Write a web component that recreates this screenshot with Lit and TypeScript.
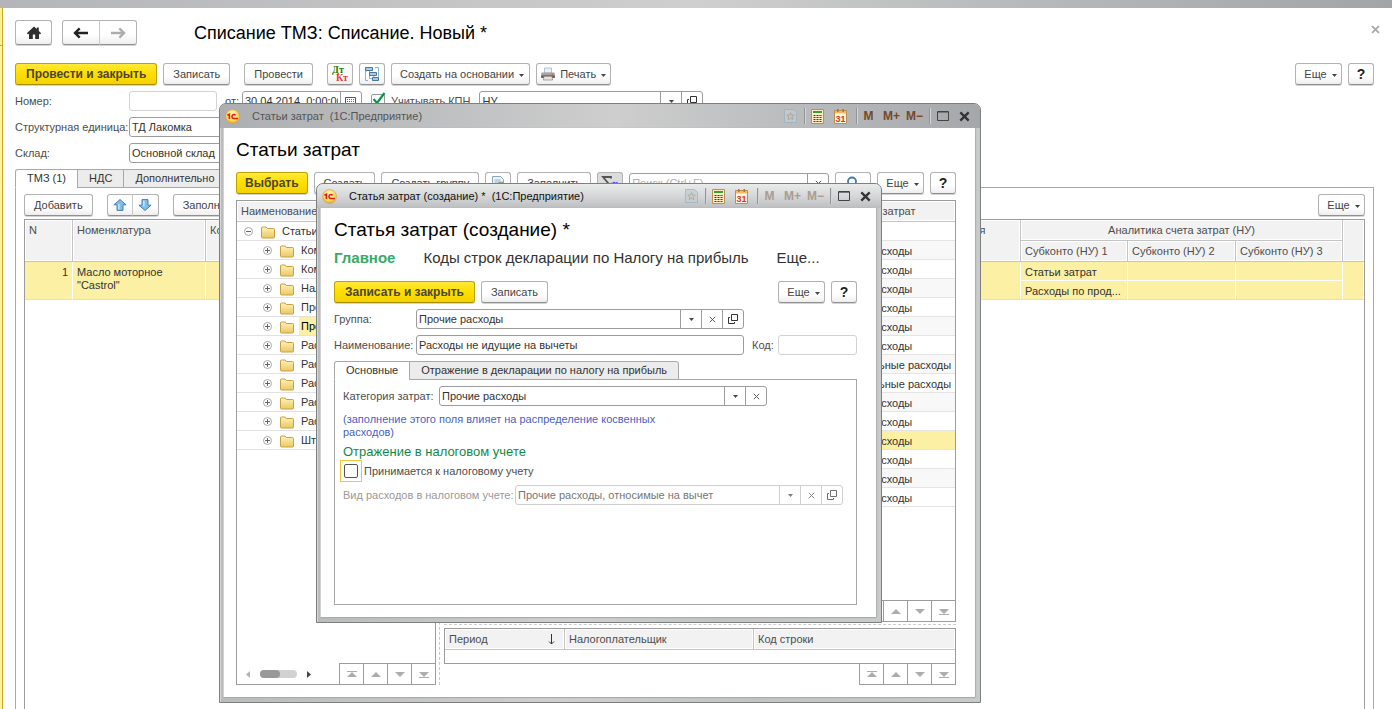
import { LitElement, html, css, svg, nothing } from "lit";
import { customElement, property } from "lit/decorators.js";
import { classMap } from "lit/directives/class-map.js";

/* ---------- icons ---------- */

const caret = html`<svg class="caret" width="5" height="3" viewBox="0 0 5 3" aria-hidden="true"><path d="M0 0h5L2.5 3z" fill="#444" /></svg>`;

const homeIcon = html`<svg width="16" height="14" viewBox="0 0 16 14" aria-hidden="true">
  <path d="M8 .6 .8 7.2l1.3 1.2.9-.8V13h3.8V8.6h2.4V13H13V7.6l.9.8 1.3-1.2-2.4-2.2V1.6h-2v1.5z" fill="#2f2f2f" /></svg>`;

const arrowIcon = (right: boolean) => html`<svg width="16" height="12" viewBox="0 0 16 12" aria-hidden="true">
  ${right
    ? svg`<path d="M1 6h12M9.300 1.300 14 6l-4.700 4.700" fill="none" stroke="#adadad" stroke-width="2.400" />`
    : svg`<path d="M15 6H3M6.700 1.300 2 6l4.700 4.700" fill="none" stroke="#222" stroke-width="2.400" />`}</svg>`;

const ledgerIcon = html`<svg width="18" height="18" viewBox="0 0 18 18" aria-hidden="true">
  <text x="1" y="8" class="dt">Дт</text><text x="5" y="16" class="kt">Кт</text></svg>`;

const structureIcon = html`<svg width="16" height="16" viewBox="0 0 16 16" aria-hidden="true">
  <g fill="none" stroke="#8fb0cc"><path d="M3 5H1.500v9.500H4M11 1.500h3.500V11M5.500 4.500v8H8M10 9.500v2" /></g>
  <path d="M1.500 1.500h7v3h-7zM5.500 6.500h7v3h-7zM8.500 11.500h6v3h-6z" fill="#a9cbe6" stroke="#44789f" /></svg>`;

const printerIcon = html`<svg width="14" height="14" viewBox="0 0 14 14" aria-hidden="true">
  <path d="M3.500 1h7v5h-7z" fill="#e9f1fa" stroke="#a5b4c4" stroke-width=".8" />
  <path d="M1 5.500h12a1 1 0 0 1 .8 1V11H.2V6.500a1 1 0 0 1 .8-1z" fill="#a9a49f" />
  <path d="M.2 8.300h13.600V11H.2z" fill="#6b625c" />
  <path d="M3 9.300h8l.7 3.700H2.300z" fill="#e8e3de" stroke="#7c736c" stroke-width=".6" />
  <path d="M10.500 6.500h2v1h-2z" fill="#d55b3a" /></svg>`;

const blueArrow = (down: boolean) => html`<svg width="14" height="12" viewBox="0 0 14 12" aria-hidden="true">
  <path d=${down ? "M7 11.500 .9 6.200H4V.6h6v5.600h3.100z" : "M7 .5.900 5.800H4v5.600h6V5.800h3.100z"} fill="#7fbfea" stroke="#3d76a6" stroke-width=".9" />
  <path d=${down ? "M5 1.500h1.600v6H5z" : "M5 5h1.600v5.500H5z"} fill="#c3e4fa" /></svg>`;

const calendarGrid = html`<svg width="11" height="9" viewBox="0 0 11 9" aria-hidden="true">
  <path d="M.5.500h10v8H.5z" fill="#fff" stroke="#555" />
  <path d="M2 2.500h7M2 4.500h7M2 6.500h7" stroke="#666" stroke-dasharray="1 1" /></svg>`;

const openIcon = html`<svg width="10" height="10" viewBox="0 0 10 10" aria-hidden="true">
  <path d="M3.500.500h6v6h-6z" fill="none" stroke="#333" /><path d="M2 3.500H.5v6h6V8" fill="none" stroke="#333" /></svg>`;

const crossIcon = html`<svg width="7" height="7" viewBox="0 0 7 7" aria-hidden="true"><path d="m.8.8 5.400 5.400M6.200.8.800 6.200" stroke="#555" /></svg>`;

const boldCross = (color: string, size: number) => html`<svg width=${size} height=${size} viewBox="0 0 10 10" aria-hidden="true">
  <path d="m1.200 1.200 7.600 7.600M8.800 1.200 1.200 8.800" stroke=${color} stroke-width="2.100" /></svg>`;

const folderIcon = html`<svg width="14" height="13" viewBox="0 0 14 13" aria-hidden="true">
  <defs><linearGradient id="fold" x1="0" y1="0" x2="0" y2="1"><stop offset="0" stop-color="#fdf3b8" /><stop offset="1" stop-color="#ecc764" /></linearGradient></defs>
  <path d="M.5 2a1 1 0 0 1 1-1h3.600l1.200 1.500h6.200a1 1 0 0 1 1 1V11a1 1 0 0 1-1 1h-11a1 1 0 0 1-1-1z" fill="url(#fold)" stroke="#c8a045" /></svg>`;

const expander = (open: boolean) => html`<svg width="9" height="9" viewBox="0 0 9 9" aria-hidden="true">
  <circle cx="4.500" cy="4.500" r="4" fill="#fff" stroke="#a8a8a8" /><path d=${open ? "M2 4.500h5" : "M2 4.500h5M4.500 2v5"} stroke="#666" /></svg>`;

const copyIcon = html`<svg width="16" height="16" viewBox="0 0 16 16" aria-hidden="true">
  <path d="M2.500 1.500h8l3 3v9h-11z" fill="#eef4fa" stroke="#8ba6bf" /><path d="M4.500 5h6M4.500 7h6M4.500 9h4" stroke="#8fb2cf" />
  <circle cx="11" cy="10" r="3.500" fill="#7fae85" /></svg>`;

const sigmaIcon = html`<svg width="18" height="16" viewBox="0 0 18 16" aria-hidden="true">
  <path d="M10 3.500V2H2l5 6-5 6h8v-1.500" fill="none" stroke="#555" stroke-width="1.800" /><path d="M10 8.500h2l1-1 1.500 1 2-1" fill="none" stroke="#4a4ae0" stroke-width="1.500" /></svg>`;

const magnifier = html`<svg width="14" height="14" viewBox="0 0 14 14" aria-hidden="true">
  <circle cx="6" cy="5.500" r="4" fill="none" stroke="#4779a8" stroke-width="1.800" /><path d="m9 9 3 4" stroke="#4779a8" stroke-width="2" /></svg>`;

const logo = html`<svg width="15" height="15" viewBox="0 0 15 15" aria-hidden="true">
  <defs><radialGradient id="sun" cx=".5" cy=".35" r=".65"><stop offset="0" stop-color="#fffbd0" /><stop offset=".7" stop-color="#fbd94b" /><stop offset="1" stop-color="#e7a52c" /></radialGradient></defs>
  <circle cx="7.500" cy="7.500" r="6.900" fill="url(#sun)" stroke="#d9a066" stroke-width=".8" />
  <path d="M2.400 6.200 4.400 5.200v4.800" fill="none" stroke="#df1f18" stroke-width="1.600" />
  <path d="M10.600 6.400A2 2 0 1 0 8.600 9.500h4.400" fill="none" stroke="#df1f18" stroke-width="1.500" /></svg>`;

const starIcon = html`<svg width="13" height="14" viewBox="0 0 13 14" aria-hidden="true" opacity=".75">
  <path d="M.5.500h9l3 3v10H.5z" fill="#c3ccd4" stroke="#9fb0bf" />
  <path d="m6.500 3.500 1.100 2.400 2.600.3-1.900 1.800.5 2.600-2.300-1.300-2.300 1.300.5-2.600-1.900-1.800 2.600-.3z" fill="#c9c2b4" stroke="#9a9484" stroke-width=".7" /></svg>`;

const calcIcon = html`<svg width="13" height="15" viewBox="0 0 13 15" aria-hidden="true">
  <path d="M.5.500h12v14H.5z" fill="#fdebc4" stroke="#b98f54" /><path d="M2 2h9v2H2z" fill="#3f9c35" />
  <path d="M2.500 6.500h8M2.500 8.500h8M2.500 10.500h8M2.500 12.500h8" stroke="#3b3b3b" stroke-dasharray="2 1" /><path d="M8.500 6.500h2" stroke="#d23a2a" /></svg>`;

const dateIcon = html`<svg width="13" height="15" viewBox="0 0 13 15" aria-hidden="true">
  <path d="M.5 1.500h12v13H.5z" fill="#fff6e2" stroke="#b98f54" /><path d="M1 2h11v2.500H1z" fill="#f0bd63" />
  <path d="M3 0h1.500v3H3zM8.500 0H10v3H8.500z" fill="#b07436" /><text x="6.500" y="13" class="day">31</text></svg>`;

const maximizeIcon = html`<svg width="12" height="10" viewBox="0 0 12 10" aria-hidden="true">
  <path d="M.5.500h11v9H.5z" fill="none" stroke="#444" /><path d="M1 1.500h10" stroke="#777" /></svg>`;

const scrollGlyph = (kind: string) => {
  const shape: Record<string, string> = {
    first: "M0 0h10v1H0zM5 1l5 5H0z",
    up: "M5 1l5 5H0z",
    down: "M0 1h10L5 6z",
    last: "M0 6h10v1H0zM0 1h10L5 6z",
  };
  return html`<svg width="10" height="7" viewBox="0 0 10 7" aria-hidden="true"><path d=${shape[kind]} fill="#adadad" /></svg>`;
};

/* ---------- window frame ---------- */

@customElement("desk-window")
export class DeskWindow extends LitElement {
  @property() caption = "";
  @property({ type: Boolean, reflect: true }) active = false;

  static styles = css`
    :host {
      position: absolute;
      box-sizing: border-box;
      display: flex;
      flex-direction: column;
      border: 1px solid #7d7f7f;
      border-radius: 7px 7px 0 0;
      padding: 0 5px 5px 4px;
      background: linear-gradient(90deg, #b9bbbd, #cfcfcf 45%, #c2c4c4 70%, #c9caca);
      box-shadow: inset 1px 1px 0 #d8d8d8;
    }
    .bar {
      display: flex;
      align-items: center;
      height: 24px;
      flex: none;
      margin: 0 -5px 0 -4px;
      border-radius: 6px 6px 0 0;
      background: linear-gradient(90deg, #adaeb1, #b8babc 20%, #cecece 52%, #b6b8ba 80%, #a6a7aa);
      color: #555;
    }
    :host([active]) .bar {
      background: linear-gradient(#e9eaea, #d6d7d8 50%, #bcbec0);
      color: #111;
    }
    .logo { display: flex; margin: 0 12px 0 5px; }
    .caption {
      flex: 1;
      min-width: 0;
      font-size: 11px;
      font-weight: 400;
      margin: 0;
      white-space: pre;
      overflow: hidden;
    }
    .tools {
      display: grid;
      grid-template-columns: 23px 5px 21px 25px 7px 17px 29px 17px 13px 14px 29px;
      align-items: center;
      justify-items: center;
      height: 22px;
      padding-right: 1px;
    }
    button {
      display: flex;
      border: 0;
      padding: 0;
      background: none;
      font: bold 12px "Liberation Sans", Arial, sans-serif;
      color: #75482a;
      white-space: nowrap;
    }
    :host([active]) .mem { color: #aa9c92; }
    .sep { width: 1px; height: 16px; background: #929496; border-right: 1px solid #d5d5d5; }
    .day { font: bold 9px "Liberation Sans", Arial, sans-serif; fill: #dc3519; text-anchor: middle; }
    .body {
      flex: 1;
      min-height: 0;
      display: flex;
      flex-direction: column;
      background: #fff;
      box-shadow: 0 1px 1px #a9abab, 1px 0 1px #b0b2b2, -1px 0 0 #d6d8d8;
    }
  `;

  render() {
    return html`
      <header class="bar">
        <span class="logo">${logo}</span>
        <h2 class="caption">${this.caption}</h2>
        <div class="tools">
          <button aria-label="Избранное">${starIcon}</button>
          <span class="sep"></span>
          <button aria-label="Калькулятор">${calcIcon}</button>
          <button aria-label="Календарь">${dateIcon}</button>
          <span class="sep"></span>
          <button class="mem">M</button>
          <button class="mem">M+</button>
          <button class="mem">M−</button>
          <span class="sep"></span>
          <button aria-label="Развернуть">${maximizeIcon}</button>
          <button aria-label="Закрыть">${boldCross("#333", 11)}</button>
        </div>
      </header>
      <div class="body"><slot></slot></div>
    `;
  }
}

/* ---------- application ---------- */

const TREE = [
  "Командировки",
  "Коммунальные",
  "Налоги",
  "Проценты",
  "Прочие расходы",
  "Расходы на оплату",
  "Расходы на рекламу",
  "Расходы на ремонт",
  "Расходы по складу",
  "Расходы прочие",
  "Штрафы, пени",
];

const OTHER = "Прочие расходы";
const MATERIAL = "Материальные расходы";
const KINDS = ["", OTHER, OTHER, OTHER, OTHER, OTHER, OTHER, MATERIAL, MATERIAL, OTHER, OTHER, OTHER, OTHER, OTHER, OTHER];

@customElement("app-root")
export class AppRoot extends LitElement {
  static styles = css`
    :host {
      --line: #9c9c9c;
      --select: #fcf0a4;
      position: relative;
      display: flex;
      flex-direction: column;
      min-height: 100vh;
      overflow: hidden;
      background: #fff;
      font: 11px/13px "Liberation Sans", Arial, sans-serif;
      color: #333;
    }
    *, *::before { box-sizing: border-box; }
    button, input { font: inherit; color: inherit; margin: 0; }
    h1, h3, p { margin: 0; font-weight: 400; }

    .strip { height: 8px; background: linear-gradient(90deg, #b4b5b8, #c9c9c9 40%, #cfcfcf 50%, #b8babb 72%, #a3a4a7); }
    .shell { flex: 1; display: flex; isolation: isolate; }
    .rail { width: 3px; background: #fdf4a6; border-right: 1px solid #c6ab16; }
    .rail::before { content: ""; display: block; height: 38px; background: #fbf09a; border-bottom: 1px solid #c6ab16; }
    .page { flex: 1; min-width: 0; display: flex; flex-direction: column; padding: 12px 18px 0 12px; }

    .row { display: flex; align-items: center; gap: 6px; }
    .push { margin-left: auto; }
    .apart { margin-left: 8px; }

    .btn {
      display: flex;
      align-items: center;
      justify-content: center;
      gap: 5px;
      flex: none;
      height: 22px;
      padding: 0 9px;
      border: 1px solid #b2b2b2;
      border-bottom-color: #8f8f8f;
      border-radius: 3px;
      background: linear-gradient(#fff 60%, #eee);
      box-shadow: 0 1px 0 #d4d4d4;
      color: #444;
      white-space: nowrap;
    }
    .btn.primary {
      padding: 0 10px;
      border-color: #c0a200;
      border-bottom-color: #a88c00;
      background: linear-gradient(#ffe93b, #ffe000 45%, #f3d200);
      font-size: 12px;
      font-weight: 700;
      color: #4d4630;
    }
    .btn.primary.short { padding: 0 8px; }
    .btn.drop { padding: 0 5px 0 8px; }
    .btn.print { padding: 0 4px; }
    .btn.square { width: 26px; padding: 0; }
    .btn.help { font-size: 14px; font-weight: 700; color: #222; }
    .btn.more { width: 47px; padding: 0 0 0 4px; }
    .btn.pressed { background: #dcdcdc; }
    .btn.find { width: 36px; padding: 0; }
    .caret { margin-top: 3px; }
    .dt, .kt { font: bold 10px "Liberation Serif", "Times New Roman", serif; }
    .dt { fill: #1c7d0c; }
    .kt { fill: #f2382f; }

    .pair { display: flex; }
    .pair .btn { border-radius: 3px 0 0 3px; padding: 0; width: 26px; }
    .pair .btn + .btn { border-left-color: #c8c8c8; margin-left: -1px; width: 27px; border-radius: 0 3px 3px 0; }

    .head { display: flex; align-items: center; height: 25px; margin-bottom: 18px; }
    .head .btn { height: 25px; width: 37px; }
    .head .pair { margin: 0 57px 0 10px; }
    .head .pair .btn { width: 38px; }
    h1 { font-size: 19px; line-height: 24px; color: #000; white-space: nowrap; }
    .head h1 { font-size: 18px; }
    .bare { display: flex; border: 0; padding: 0; background: none; }
    .head .bare { margin: -6px -6px 0 auto; }

    .form { display: grid; gap: 6px; padding: 6px 0; }
    .lab { color: #4d4d4d; white-space: nowrap; flex: none; }
    .form .lab.main { width: 114px; }
    .form .row { gap: 0; }
    .field {
      display: flex;
      height: 20px;
      border: 1px solid var(--line);
      border-radius: 3px;
      background: #fff;
      overflow: hidden;
      flex: none;
    }
    .field input { flex: 1; min-width: 0; border: 0; padding: 0 2px; background: none; outline: 0; }
    .field input::placeholder { color: #b0b0b0; }
    .field button {
      width: 21px;
      flex: none;
      display: flex;
      align-items: center;
      justify-content: center;
      padding: 0;
      border: 0;
      border-left: 1px solid var(--line);
      background: none;
    }
    .field .caret { margin: 0; }
    .field.faint { border-color: #d2d2d2; }
    .field.off { border-color: #cfcfcf; color: #777; }
    .field.off button { border-color: #cfcfcf; }
    .field.off svg { opacity: .7; }
    .w328 { width: 328px; }
    .number { width: 88px; }
    .date { width: 120px; }
    .book { width: 224px; }
    .wide { width: 574px; }
    .from { margin: 0 3px 0 8px; }
    .tax { margin: 0 9px 0 6px; }
    .field.search { flex: 1; min-width: 0; }

    .check {
      appearance: none;
      width: 14px;
      height: 14px;
      flex: none;
      border: 1px solid #555;
      border-radius: 2px;
      background: #fff;
    }
    .tick { position: relative; display: flex; margin-left: 9px; }
    .tick .check { border-color: #999; }
    .tick svg { position: absolute; left: 1px; top: -2px; pointer-events: none; }
    .focus { display: flex; padding: 3px; border: 1px solid #f3c832; margin-left: -3px; }

    .tabs { display: flex; position: relative; z-index: 1; height: 19px; margin-bottom: -1px; }
    .tab {
      border: 1px solid #a8a8a8;
      margin-left: -1px;
      background: #ececec;
      padding: 0 11px;
      white-space: nowrap;
    }
    .tab:first-child { margin: 0; border-radius: 3px 0 0 0; }
    .tab:last-child { border-radius: 0 3px 0 0; }
    .tab.on { background: #fff; border-bottom-color: #fff; }
    .panel { flex: 1; min-height: 0; display: flex; flex-direction: column; border: 1px solid #a8a8a8; }
    .page > .panel { border-bottom: 0; padding: 6px 8px 0 8px; gap: 3px; }
    .page > .panel > .row { gap: 14px; }

    .grid { border: 1px solid var(--line); overflow: hidden; }
    .page .grid.goods { flex: 1; border-bottom: 0; }
    table { width: 100%; border-collapse: separate; border-spacing: 0; table-layout: fixed; }
    th, td { padding: 0 4px; text-align: left; font-weight: 400; overflow: hidden; white-space: nowrap; }
    td { padding-top: 2px; }
    th {
      height: 21px;
      background: #f2f2f2;
      color: #4d4d4d;
      border-right: 1px solid #c4c4c4;
      border-bottom: 1px solid #c4c4c4;
      box-shadow: inset 0 0 0 1px #fff;
    }
    th.last, td.last { border-right: 0; }
    th.mid { text-align: center; }
    .top { vertical-align: top; padding-top: 4px; }
    .goods td { height: 19px; background: var(--select); border-right: 1px solid #fff; }
    .goods td.cut { border-bottom: 1px solid #fff; }
    .goods td.end { border-bottom: 1px solid #ddd; }
    .goods td.num { text-align: right; }
    .c-n { width: 48px; }
    .c-name { width: 133px; }
    .c-item { width: 75px; }
    .c-s1 { width: 107px; }
    .c-s2 { width: 108px; }
    .c-tail { width: 21px; }

    .first { left: 219px; top: 103px; width: 762px; height: 600px; }
    .second { left: 316px; top: 183px; width: 566px; height: 440px; }
    .sheet { flex: 1; min-height: 0; display: flex; flex-direction: column; padding: 10px 19px 12px 12px; }
    .second .sheet { padding-left: 13px; }

    .split { flex: 1; min-height: 0; display: grid; grid-template-columns: 200px 1fr; gap: 8px; margin-top: 6px; }
    .first h1 { margin-bottom: 10px; }
    .tree { display: flex; flex-direction: column; min-width: 0; border: 1px solid var(--line); }
    .colhead { height: 21px; padding: 4px; background: #f2f2f2; border-bottom: 1px solid #c4c4c4; box-shadow: inset 0 0 0 1px #fff; color: #4d4d4d; }
    ul { list-style: none; margin: 0; padding: 0; flex: 1; }
    li { display: flex; align-items: center; height: 19px; padding-left: 26px; border-bottom: 1px solid #e2e2e2; white-space: nowrap; }
    li svg { flex: none; }
    li.root { padding-left: 7px; }
    li .folder { display: flex; flex: none; margin: 2px 5px 0 8px; }
    li .name { padding: 3px 2px 2px; overflow: hidden; }
    li.on .name { background: var(--select); color: #000; }
    .foot { display: flex; align-items: center; justify-content: space-between; height: 22px; }
    .tree .foot { margin: 0 -1px -1px 0; }
    .slider { display: flex; align-items: center; gap: 10px; padding-left: 9px; }
    .track { width: 37px; height: 8px; border-radius: 4px; background: #d2d2d2; display: flex; }
    .thumb { width: 20px; border-radius: 4px; background: #999; }
    .pager { display: flex; margin-left: auto; }
    .pager button {
      width: 25px;
      height: 22px;
      display: flex;
      align-items: center;
      justify-content: center;
      padding: 0;
      margin-left: -1px;
      border: 1px solid var(--line);
      background: #fff;
    }
    .side { display: flex; flex-direction: column; min-width: 0; min-height: 0; border-left: 1px dashed #c8c8c8; margin-left: -5px; padding-left: 4px; }
    .side .items { flex: 1; margin-bottom: -1px; }
    .items td { height: 19px; border-bottom: 1px solid #e4e4e4; }
    .items tr:nth-child(even) td { background: #f8f8f8; }
    .items tr.on td { background: var(--select); }
    .c-kind { width: 131px; }
    .rule { border-top: 1px dashed #ccc; margin: 2px 0 3px; }
    .periods { height: 36px; flex: none; margin-bottom: -1px; }
    .c-p1 { width: 120px; }
    .c-p2 { width: 189px; }
    .sorted { display: flex; justify-content: space-between; align-items: center; padding-right: 5px; }

    .menu { display: flex; gap: 28px; margin: 6px 0 13px; font-size: 15px; line-height: 20px; white-space: nowrap; }
    .menu a { color: #333; text-decoration: none; }
    .menu a.on { color: #3aa968; font-weight: 700; }
    .second .lab.name { width: 82px; }
    .fields { display: grid; grid-template-columns: minmax(0, 1fr); gap: 6px; padding: 6px 0; }
    .fields .row { gap: 0; }
    .code { margin: 0 4px 0 8px; }
    .field.rest { flex: 1; min-width: 0; }
    .second .panel { padding: 6px 8px; }
    .second .panel .row { gap: 0; }
    .lab.cat { width: 96px; }
    .lab.sort { width: 172px; color: #999; }
    .hint { color: #4a5fc4; margin: 7px 0 5px; max-width: 340px; }
    h3 { font-size: 13px; line-height: 16px; color: #118a46; margin-bottom: 1px; }
    .accept { margin-bottom: 4px; height: 20px; }
    .accept .lab { margin-left: 2px; }
  `;

  private more() {
    return html`<button class="btn more">Еще ${caret}</button>`;
  }

  private help() {
    return html`<button class="btn square help">?</button>`;
  }

  private pager() {
    const names: [string, string][] = [["first", "В начало"], ["up", "Вверх"], ["down", "Вниз"], ["last", "В конец"]];
    return html`<div class="pager">${names.map(([k, l]) => html`<button aria-label=${l}>${scrollGlyph(k)}</button>`)}</div>`;
  }

  private combo(id: string, value: string, parts: string, cls = "w328", off = false) {
    return html`<div class=${classMap({ field: true, [cls]: true, off })}>
      <input id=${id} .value=${value} ?disabled=${off} />
      ${parts.includes("d") ? html`<button aria-label="Выбрать из списка">${caret}</button>` : nothing}
      ${parts.includes("x") ? html`<button aria-label="Очистить">${crossIcon}</button>` : nothing}
      ${parts.includes("o") ? html`<button aria-label="Открыть">${openIcon}</button>` : nothing}
    </div>`;
  }

  private document() {
    return html`
      <main class="page">
        <div class="head">
          <button class="btn" aria-label="Начальная страница">${homeIcon}</button>
          <div class="pair">
            <button class="btn" aria-label="Назад">${arrowIcon(false)}</button>
            <button class="btn" aria-label="Вперед">${arrowIcon(true)}</button>
          </div>
          <h1>Списание ТМЗ: Списание. Новый *</h1>
          <button class="bare" aria-label="Закрыть">${boldCross("#aaa", 9)}</button>
        </div>
        <div class="row">
          <button class="btn primary">Провести и закрыть</button>
          <button class="btn">Записать</button>
          <button class="btn apart">Провести</button>
          <button class="btn square apart" aria-label="Проводки">${ledgerIcon}</button>
          <button class="btn square" aria-label="Структура подчиненности">${structureIcon}</button>
          <button class="btn drop">Создать на основании ${caret}</button>
          <button class="btn print">${printerIcon} Печать ${caret}</button>
          <span class="push row">${this.more()}${this.help()}</span>
        </div>
        <div class="form">
          <div class="row">
            <label class="lab main" for="number">Номер:</label>
            <div class="field faint number"><input id="number" /></div>
            <label class="lab from" for="date">от:</label>
            <div class="field date"><input id="date" .value=${"30.04.2014  0:00:00"} /><button aria-label="Выбрать дату">${calendarGrid}</button></div>
            <span class="tick">
              <input class="check" type="checkbox" id="tax" checked />
              <svg width="14" height="13" viewBox="0 0 14 13" aria-hidden="true"><path d="m1.500 7 3.500 4 7.500-10" fill="none" stroke="#0a9648" stroke-width="2.200" /></svg>
            </span>
            <label class="lab tax" for="tax">Учитывать КПН</label>
            <div class="field book">
              <input aria-label="Вид учета" .value=${"НУ"} />
              <button aria-label="Выбрать из списка">${caret}</button><button aria-label="Открыть">${openIcon}</button>
            </div>
          </div>
          <div class="row"><label class="lab main" for="unit">Структурная единица:</label>${this.combo("unit", "ТД Лакомка", "do", "wide")}</div>
          <div class="row"><label class="lab main" for="store">Склад:</label>${this.combo("store", "Основной склад", "do", "wide")}</div>
        </div>
        <div class="tabs" role="tablist">
          <button class="tab on" role="tab">ТМЗ (1)</button>
          <button class="tab" role="tab">НДС</button>
          <button class="tab" role="tab">Дополнительно</button>
        </div>
        <section class="panel">
          <div class="row">
            <button class="btn">Добавить</button>
            <div class="pair">
              <button class="btn" aria-label="Переместить вверх">${blueArrow(false)}</button>
              <button class="btn" aria-label="Переместить вниз">${blueArrow(true)}</button>
            </div>
            <button class="btn">Заполнить</button>
            <span class="push">${this.more()}</span>
          </div>
          <div class="grid goods">
            <table>
              <colgroup>
                <col class="c-n" /><col class="c-name" /><col /><col class="c-item" />
                <col class="c-s1" /><col class="c-s2" /><col class="c-s1" /><col class="c-tail" />
              </colgroup>
              <thead>
                <tr>
                  <th class="top" rowspan="2">N</th><th class="top" rowspan="2">Номенклатура</th><th class="top" rowspan="2">Количество</th>
                  <th class="top" rowspan="2">Статья</th><th class="mid" colspan="3">Аналитика счета затрат (НУ)</th><th class="last" rowspan="2"></th>
                </tr>
                <tr><th>Субконто (НУ) 1</th><th>Субконто (НУ) 2</th><th>Субконто (НУ) 3</th></tr>
              </thead>
              <tbody>
                <tr>
                  <td class="top num end" rowspan="2">1</td><td class="top end" rowspan="2">Масло моторное<br />"Castrol"</td>
                  <td class="end" rowspan="2"></td><td class="end" rowspan="2"></td>
                  <td class="cut">Статьи затрат</td><td class="cut"></td><td class="cut"></td><td class="end last" rowspan="2"></td>
                </tr>
                <tr><td class="end">Расходы по прод...</td><td class="end"></td><td class="end"></td></tr>
              </tbody>
            </table>
          </div>
        </section>
      </main>
    `;
  }

  private listWindow() {
    return html`
      <desk-window class="first" caption="Статьи затрат  (1С:Предприятие)">
        <div class="sheet">
          <h1>Статьи затрат</h1>
          <div class="row">
            <button class="btn primary short">Выбрать</button>
            <button class="btn">Создать</button>
            <button class="btn">Создать группу</button>
            <button class="btn square" aria-label="Скопировать">${copyIcon}</button>
            <button class="btn">Заполнить</button>
            <button class="btn square pressed" aria-label="Итоги">${sigmaIcon}</button>
            <div class="field search"><input aria-label="Поиск" placeholder="Поиск (Ctrl+F)" /><button aria-label="Очистить">${crossIcon}</button></div>
            <button class="btn find" aria-label="Найти">${magnifier}</button>
            ${this.more()}${this.help()}
          </div>
          <div class="split">
            <div class="tree">
              <div class="colhead">Наименование</div>
              <ul>
                <li class="root">${expander(true)}<span class="folder">${folderIcon}</span><span class="name">Статьи затрат</span></li>
                ${TREE.map((name, i) => html`<li class=${classMap({ on: i === 4 })}>
                  ${expander(false)}<span class="folder">${folderIcon}</span><span class="name">${name}</span></li>`)}
              </ul>
              <div class="foot">
                <div class="slider">
                  <svg width="4" height="7" viewBox="0 0 4 7" aria-hidden="true"><path d="M4 0v7L0 3.500z" fill="#b5b5b5" /></svg>
                  <div class="track"><div class="thumb"></div></div>
                  <svg width="4" height="7" viewBox="0 0 4 7" aria-hidden="true"><path d="M0 0v7l4-3.500z" fill="#444" /></svg>
                </div>
                ${this.pager()}
              </div>
            </div>
            <div class="side">
              <div class="grid items">
                <table>
                  <colgroup><col /><col class="c-kind" /></colgroup>
                  <thead><tr><th>Наименование</th><th class="last">Категория затрат</th></tr></thead>
                  <tbody>${KINDS.map((k, i) => html`<tr class=${classMap({ on: i === 11 })}><td></td><td>${k}</td></tr>`)}</tbody>
                </table>
              </div>
              <div class="foot">${this.pager()}</div>
              <div class="rule"></div>
              <div class="grid periods">
                <table>
                  <colgroup><col class="c-p1" /><col class="c-p2" /><col /></colgroup>
                  <thead><tr>
                    <th><span class="sorted">Период<svg width="7" height="11" viewBox="0 0 7 11" aria-hidden="true"><path d="M3.500 0v10M1 7.500l2.500 2.500L6 7.500" fill="none" stroke="#333" /></svg></span></th>
                    <th>Налогоплательщик</th><th class="last">Код строки</th>
                  </tr></thead>
                </table>
              </div>
              <div class="foot">${this.pager()}</div>
            </div>
          </div>
        </div>
      </desk-window>
    `;
  }

  private editWindow() {
    return html`
      <desk-window class="second" active caption="Статья затрат (создание) *  (1С:Предприятие)">
        <div class="sheet">
          <h1>Статья затрат (создание) *</h1>
          <nav class="menu">
            <a class="on" href="#main">Главное</a>
            <a href="#codes">Коды строк декларации по Налогу на прибыль</a>
            <a href="#more">Еще...</a>
          </nav>
          <div class="row">
            <button class="btn primary">Записать и закрыть</button>
            <button class="btn">Записать</button>
            <span class="push row">${this.more()}${this.help()}</span>
          </div>
          <div class="fields">
            <div class="row"><label class="lab name" for="group">Группа:</label>${this.combo("group", "Прочие расходы", "dxo")}</div>
            <div class="row">
              <label class="lab name" for="title">Наименование:</label>${this.combo("title", "Расходы не идущие на вычеты", "")}
              <label class="lab code" for="code">Код:</label><div class="field faint rest"><input id="code" /></div>
            </div>
          </div>
          <div class="tabs" role="tablist">
            <button class="tab on" role="tab">Основные</button>
            <button class="tab" role="tab">Отражение в декларации по налогу на прибыль</button>
          </div>
          <section class="panel">
            <div class="row"><label class="lab cat" for="category">Категория затрат:</label>${this.combo("category", "Прочие расходы", "dx")}</div>
            <p class="hint">(заполнение этого поля влияет на распределение косвенных расходов)</p>
            <h3>Отражение в налоговом учете</h3>
            <div class="row accept">
              <span class="focus"><input class="check" type="checkbox" id="accept" /></span>
              <label class="lab" for="accept">Принимается к налоговому учету</label>
            </div>
            <div class="row"><label class="lab sort" for="sort">Вид расходов в налоговом учете:</label>${this.combo("sort", "Прочие расходы, относимые на вычет", "dxo", "w328", true)}</div>
          </section>
        </div>
      </desk-window>
    `;
  }

  render() {
    return html`
      <div class="strip"></div>
      <div class="shell"><div class="rail"></div>${this.document()}</div>
      ${this.listWindow()}${this.editWindow()}
    `;
  }
}
